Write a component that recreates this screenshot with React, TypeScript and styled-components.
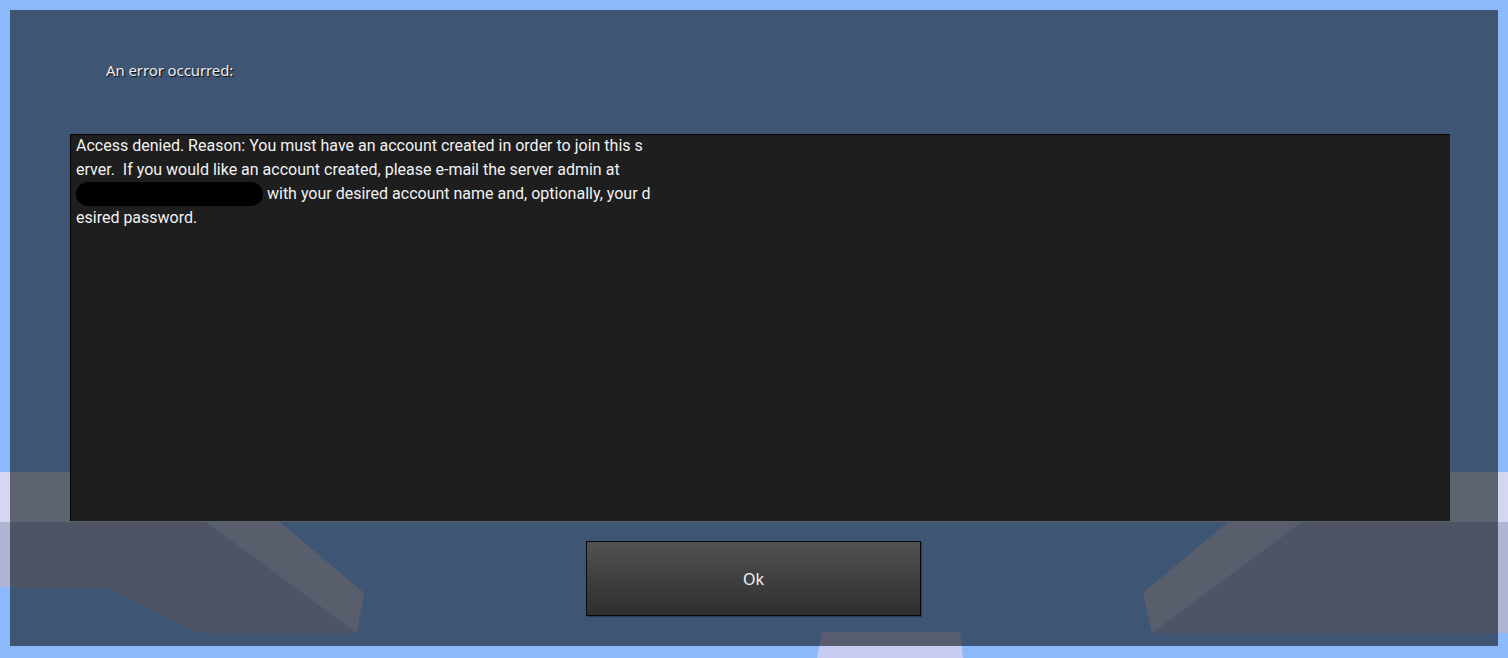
import React from "react";
import styled, { createGlobalStyle } from "styled-components";

const Global = createGlobalStyle`
  html, body { margin: 0; padding: 0; }
  body {
    width: 1508px;
    height: 658px;
    overflow: hidden;
    background: #8cb9f9;
    position: relative;
  }
`;

const Scene = styled.svg`
  position: absolute;
  left: 0;
  top: 0;
  z-index: 0;
`;

const Overlay = styled.div`
  position: relative;
  z-index: 1;
  margin: 10px;
  height: 636px;
  background: rgba(4, 10, 14, 0.57);
  display: flex;
  flex-direction: column;
`;

const Title = styled.div`
  padding: 51px 0 0 96px;
  height: 124px;
  box-sizing: border-box;
  font-family: "Noto Sans", sans-serif;
  font-size: 15px;
  line-height: 18px;
  letter-spacing: -0.1px;
  color: #eceef2;
  text-shadow: 1px 1px 1px rgba(0, 0, 0, 0.9);
`;

const MessageBox = styled.div`
  margin-left: 60px;
  width: 1380px;
  height: 387px;
  box-sizing: border-box;
  background: #1e1e1e;
  border-top: 1px solid #050505;
  border-left: 1px solid #050505;
  padding: 0 0 0 5px;
  overflow: hidden;
`;

const MessageText = styled.div`
  margin-top: -1px;
  font-family: Roboto, "Liberation Sans", sans-serif;
  font-size: 16px;
  line-height: 24px;
  color: #f2f2f2;
  white-space: pre;
`;

const Redacted = styled.span`
  display: inline-block;
  width: 187px;
  height: 24px;
  border-radius: 12px;
  background: #000;
  vertical-align: top;
`;

const ButtonRow = styled.div`
  display: flex;
  padding: 20px 0 0 576px;
`;

const OkButton = styled.button`
  width: 335px;
  height: 75px;
  border: 1px solid #0a0a0a;
  background: linear-gradient(#525252, #2e2e2e);
  color: #f4f4f4;
  font-family: "Noto Sans", sans-serif;
  font-size: 16px;
  cursor: pointer;
  padding: 0;
  box-shadow: 1px 1px 1px rgba(0, 0, 0, 0.3);
`;

export default function App() {
  return (
    <>
      <Global />
      <Scene width="1508" height="658" viewBox="0 0 1508 658">
        <rect x="0" y="472" width="1508" height="50" fill="#d5d7f2" />
        <polygon points="0,522 206,522 357,633 198,633 108,587 0,587" fill="#b1b4d2" />
        <polygon points="206,522 280,522 364,593 357,633" fill="#c9ccea" />
        <polygon points="1302,522 1508,522 1508,633 1152,633" fill="#b1b4d2" />
        <polygon points="1228,522 1302,522 1152,633 1143,593" fill="#c9ccea" />
        <polygon points="822,632 960,632 963,658 817,658" fill="#c8ccf2" />
      </Scene>
      <Overlay>
        <Title>An error occurred:</Title>
        <MessageBox>
          <MessageText>
            {"Access denied. Reason: You must have an account created in order to join this s\n"}
            {"erver.  If you would like an account created, please e-mail the server admin at\n"}
            <Redacted />
            {" with your desired account name and, optionally, your d\n"}
            {"esired password."}
          </MessageText>
        </MessageBox>
        <ButtonRow>
          <OkButton>Ok</OkButton>
        </ButtonRow>
      </Overlay>
    </>
  );
}
